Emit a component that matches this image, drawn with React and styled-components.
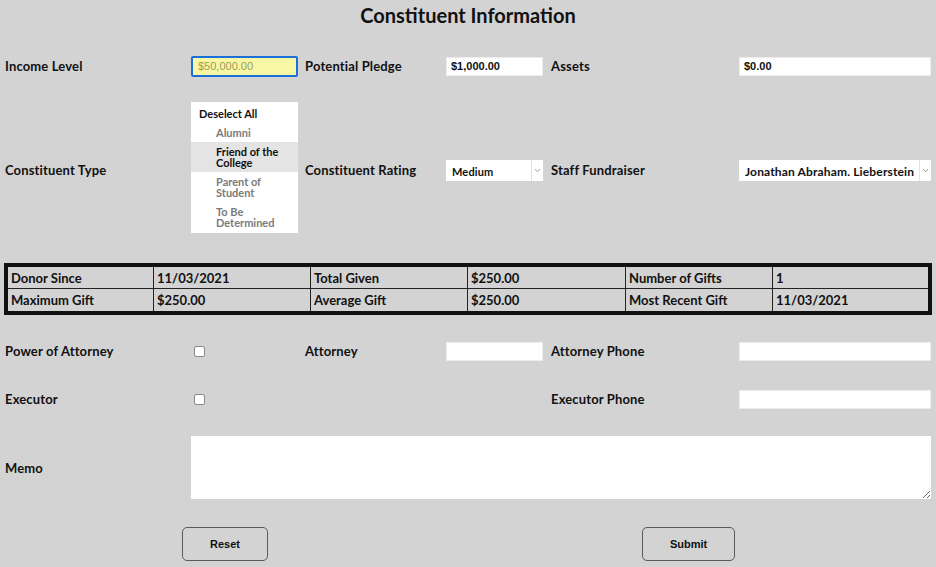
import React from 'react'
import styled, { createGlobalStyle } from 'styled-components'

const GlobalStyle = createGlobalStyle`
  body {
    margin: 0;
    background: #d3d3d3;
    font-family: Lato, 'Noto Sans', sans-serif;
    color: #111;
  }
`

const Page = styled.div`
  width: 936px;
  height: 567px;
  overflow: hidden;
`

const Title = styled.h1`
  margin: 4px 0 0;
  font-size: 20px;
  line-height: 22px;
  font-weight: 700;
  text-align: center;
`

const Row = styled.div`
  display: grid;
  grid-template-columns: 186px 114px 141px 105px 188px 192px;
  align-items: center;
  padding: 0 5px;
  height: ${(p) => p.$h}px;
  margin-top: ${(p) => p.$top}px;
`

const Label = styled.label`
  font-size: 13px;
  font-weight: 700;
  letter-spacing: 0.15px;
  white-space: nowrap;
  margin-top: ${(p) => p.$offset || 0}px;
`

const TextInput = styled.input`
  box-sizing: border-box;
  width: ${(p) => p.$w}px;
  height: 19px;
  border: 1px solid #ececec;
  background: #fff;
  padding: 0 4px;
  font-family: 'Liberation Sans', Arial, sans-serif;
  font-size: 11px;
  font-weight: 700;
  color: #111;
  outline: none;
`

const FocusedInput = styled(TextInput)`
  height: 21px;
  border: 2px solid #1b6fd8;
  border-radius: 2px;
  background: #f8f8a4;
  color: #9c9a5c;
  font-weight: 400;
  padding: 0 5px;
`

const SelectWrap = styled.div`
  display: flex;
  width: ${(p) => p.$w}px;
  height: 21px;
  margin-top: 5px;
  background: #fff;
`

const Select = styled.select`
  appearance: none;
  flex: 1;
  min-width: 0;
  border: none;
  background: transparent;
  padding: 2px 0 0 6px;
  font-family: Lato, 'Noto Sans', sans-serif;
  font-size: ${(p) => p.$fs || 11}px;
  font-weight: 700;
  letter-spacing: 0.15px;
  color: #111;
  outline: none;
`

const Arrow = styled.span`
  width: 11px;
  border-left: 1px solid #e2e2e2;
  display: flex;
  align-items: center;
  justify-content: center;
`

const ListBox = styled.div`
  width: 107px;
  height: 131px;
  background: #fff;
  font-size: 11px;
  font-weight: 700;
  line-height: 11px;
`

const ListItem = styled.div`
  padding: ${(p) => (p.$head ? '6px 8px 4px' : '4px 8px 4px 25px')};
  color: ${(p) => (p.$muted ? '#7b7b7b' : '#111')};
  background: ${(p) => (p.$selected ? '#e4e4e4' : 'transparent')};
`

const Stats = styled.div`
  margin: 30px 4px 0;
  border: 4px solid #111;
  display: grid;
  grid-template-columns: 146px 157px 157px 158px 147px 1fr;
`

const Cell = styled.div`
  height: 22px;
  box-sizing: border-box;
  border-right: ${(p) => (p.$last ? 'none' : '1px solid #222')};
  border-bottom: ${(p) => (p.$bottom ? 'none' : '1px solid #222')};
  padding: 0 3px;
  display: flex;
  align-items: center;
  font-size: 13px;
  font-weight: 700;
  white-space: nowrap;
`

const Check = styled.input`
  appearance: none;
  width: 11px;
  height: 11px;
  margin: 0 0 0 3px;
  border: 1px solid #8a8a8a;
  border-radius: 2px;
  background: #fff;
`

const Memo = styled.textarea`
  grid-column: 2 / 7;
  box-sizing: border-box;
  height: 63px;
  border: none;
  background: #fff;
  resize: both;
  outline: none;
`

const ButtonBar = styled.div`
  display: flex;
  gap: 374px;
  padding-left: 182px;
  margin-top: 28px;
`

const Button = styled.button`
  height: 34px;
  padding: 0 27px;
  border: 1px solid #5a5a5a;
  border-radius: 5px;
  background: transparent;
  font-family: 'Liberation Sans', Arial, sans-serif;
  font-size: 11px;
  font-weight: 700;
  color: #111;
`

const Chevron = () => (
  <svg width="7" height="5" viewBox="0 0 7 5">
    <path d="M1 1.2 L3.5 3.6 L6 1.2" fill="none" stroke="#9a9a9a" strokeWidth="1" />
  </svg>
)

const stats = [
  ['Donor Since', '11/03/2021', 'Total Given', '$250.00', 'Number of Gifts', '1'],
  ['Maximum Gift', '$250.00', 'Average Gift', '$250.00', 'Most Recent Gift', '11/03/2021'],
]

export default function App() {
  return (
    <Page>
      <GlobalStyle />
      <Title>Constituent Information</Title>

      <Row $h={36} $top={22}>
        <Label>Income Level</Label>
        <FocusedInput $w={107} defaultValue="$50,000.00" />
        <Label>Potential Pledge</Label>
        <TextInput $w={97} defaultValue="$1,000.00" />
        <Label>Assets</Label>
        <TextInput $w={192} defaultValue="$0.00" />
      </Row>

      <Row $h={131} $top={18}>
        <Label $offset={5}>Constituent Type</Label>
        <ListBox>
          <ListItem $head>Deselect All</ListItem>
          <ListItem $muted>Alumni</ListItem>
          <ListItem $selected>Friend of the College</ListItem>
          <ListItem $muted>Parent of Student</ListItem>
          <ListItem $muted>To Be Determined</ListItem>
        </ListBox>
        <Label $offset={5}>Constituent Rating</Label>
        <SelectWrap $w={97}>
          <Select defaultValue="Medium">
            <option>Low</option>
            <option>Medium</option>
            <option>High</option>
          </Select>
          <Arrow><Chevron /></Arrow>
        </SelectWrap>
        <Label $offset={5}>Staff Fundraiser</Label>
        <SelectWrap $w={192}>
          <Select $fs={12} defaultValue="Jonathan Abraham. Lieberstein">
            <option>Jonathan Abraham. Lieberstein</option>
          </Select>
          <Arrow><Chevron /></Arrow>
        </SelectWrap>
      </Row>

      <Stats>
        {stats.map((row, r) =>
          row.map((text, c) => (
            <Cell key={`${r}-${c}`} $last={c === 5} $bottom={r === 1}>
              {text}
            </Cell>
          ))
        )}
      </Stats>

      <Row $h={20} $top={26}>
        <Label>Power of Attorney</Label>
        <Check type="checkbox" />
        <Label>Attorney</Label>
        <TextInput $w={97} />
        <Label>Attorney Phone</Label>
        <TextInput $w={192} />
      </Row>

      <Row $h={20} $top={28}>
        <Label>Executor</Label>
        <Check type="checkbox" />
        <span />
        <span />
        <Label>Executor Phone</Label>
        <TextInput $w={192} />
      </Row>

      <Row $h={63} $top={27}>
        <Label>Memo</Label>
        <Memo />
      </Row>

      <ButtonBar>
        <Button>Reset</Button>
        <Button>Submit</Button>
      </ButtonBar>
    </Page>
  )
}
